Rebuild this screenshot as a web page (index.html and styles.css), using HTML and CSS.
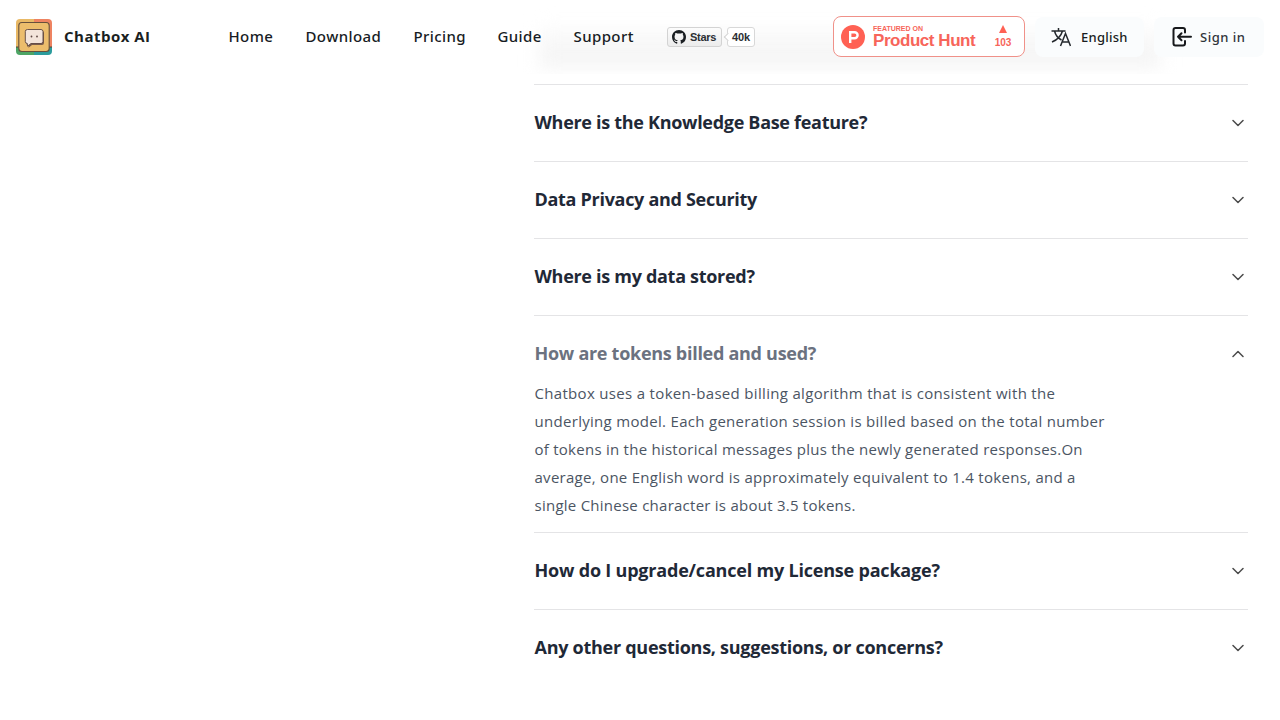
FILE: index.html
```html
<!DOCTYPE html>
<html lang="en">
<head>
<meta charset="utf-8">
<title>Chatbox AI</title>
<link rel="stylesheet" href="styles.css">
</head>
<body>
<header class="header">
  <a class="brand">
    <svg class="logo" viewBox="0 0 36 36">
      <defs><clipPath id="logo-clip"><rect width="36" height="36" rx="4"/></clipPath></defs>
      <g clip-path="url(#logo-clip)">
        <rect width="18" height="28" fill="#e9b966"/><rect x="18" width="18" height="28" fill="#ee8361"/>
        <rect y="28" width="18" height="8" fill="#4da565"/><rect x="18" y="28" width="18" height="8" fill="#2b9c9d"/>
        <path d="M0 28h3M33 28h3" stroke="#5a4638"/>
        <rect x="2.8" y="3.500" width="30.400" height="29" rx="3" fill="#ecbd6c" stroke="#66503c" stroke-width="1.1"/>
        <path d="M12.500 12h13.500q2 0 2 2v10q0 2-2 2H16l-3.500 2.700-.2-2.700q-2-.1-2-2V14q0-2 2.200-2z" fill="#7a5c4b"/>
        <path d="M11.500 10.500h13.500q2 0 2 2v10q0 2-2 2H15l-3.500 2.700-.2-2.700q-2-.1-2-2v-10q0-2 2.200-2z" fill="#f3e4da" stroke="#5c4540" stroke-width=".9"/>
        <circle cx="15.500" cy="17.500" r=".9" fill="#5c4540"/><circle cx="21" cy="17.500" r=".9" fill="#5c4540"/>
      </g>
    </svg>
    <span class="brand-name">Chatbox AI</span>
  </a>
  <nav class="nav">
    <a class="home">Home</a><a class="download">Download</a><a class="pricing">Pricing</a><a class="guide">Guide</a><a class="support">Support</a>
  </nav>
  <div class="github">
    <a class="gh-button">
      <svg class="gh-icon" viewBox="0 0 16 16"><path d="M8 0C3.580 0 0 3.580 0 8c0 3.540 2.290 6.530 5.470 7.590.4.070.550-.170.550-.380 0-.190-.010-.820-.010-1.490-2.010.370-2.530-.490-2.690-.940-.090-.230-.480-.940-.820-1.130-.280-.150-.680-.520-.010-.530.630-.010 1.080.580 1.230.820.720 1.210 1.870.870 2.330.660.070-.520.280-.870.510-1.070-1.780-.200-3.640-.890-3.640-3.950 0-.870.310-1.590.820-2.150-.080-.200-.360-1.020.080-2.120 0 0 .670-.210 2.200.820.640-.180 1.320-.270 2-.270s1.360.090 2 .270c1.530-1.040 2.200-.820 2.200-.820.440 1.100.160 1.920.080 2.120.510.560.820 1.270.820 2.150 0 3.070-1.870 3.750-3.650 3.950.290.250.540.730.540 1.480 0 1.070-.010 1.930-.010 2.200 0 .210.150.460.550.380A8.010 8.010 0 0 0 16 8c0-4.420-3.580-8-8-8z"/></svg>
      <span>Stars</span>
    </a>
    <a class="gh-count">40k</a>
  </div>
  <a class="product-hunt">
    <span class="ph-mark"><svg viewBox="0 0 24 24"><path fill-rule="evenodd" d="M8 6h5.600a4.200 4.200 0 0 1 0 8.400H10.400V18H8zM10.400 8.400v3.600h3.200a1.800 1.800 0 0 0 0-3.600z"/></svg></span>
    <span class="ph-text"><span class="ph-small">FEATURED ON</span><span class="ph-big">Product Hunt</span></span>
    <span class="ph-votes"><svg viewBox="0 0 10 10"><path d="M5 0l5 10H0z"/></svg><span>103</span></span>
  </a>
  <a class="action language">
    <svg class="language-icon" viewBox="0 0 20 20"><path d="M.5 4h14M7.500 1v3M3.500 4c1 4 4 7.500 7 9M11.500 4C10 9 6 13 1 15M9.500 19l5-12.500 5 12.500M11.200 15h6.600"/></svg>
    <span>English</span>
  </a>
  <a class="action signin">
    <svg class="signin-icon" viewBox="0 0 20 20"><path d="M13 5.500V3q0-2-2-2H3.500Q1.500 1 1.500 3v13.500q0 2 2 2H11q2 0 2-2V14M19 9.800H6M9.500 6.300L6 9.800l3.500 3.500"/></svg>
    <span>Sign in</span>
  </a>
</header>
<main class="faq">
  <section class="item"><h3 class="q1">Where is the Knowledge Base feature?</h3><svg class="chevron" viewBox="0 0 12 8"><path d="M1 1.500l5 5 5-5"/></svg></section>
  <section class="item"><h3 class="q2">Data Privacy and Security</h3><svg class="chevron" viewBox="0 0 12 8"><path d="M1 1.500l5 5 5-5"/></svg></section>
  <section class="item"><h3 class="q3">Where is my data stored?</h3><svg class="chevron" viewBox="0 0 12 8"><path d="M1 1.500l5 5 5-5"/></svg></section>
  <section class="item open">
    <div class="question"><h3 class="q4">How are tokens billed and used?</h3><svg class="chevron" viewBox="0 0 12 8"><path d="M1 6.500l5-5 5 5"/></svg></div>
    <p class="answer"><span class="a1">Chatbox uses a token-based billing algorithm that is consistent with the</span><br><span class="a2">underlying model. Each generation session is billed based on the total number</span><br><span class="a3">of tokens in the historical messages plus the newly generated responses.On</span><br><span class="a4">average, one English word is approximately equivalent to 1.4 tokens, and a</span><br><span class="a5">single Chinese character is about 3.5 tokens.</span></p>
  </section>
  <section class="item"><h3 class="q5">How do I upgrade/cancel my License package?</h3><svg class="chevron" viewBox="0 0 12 8"><path d="M1 1.500l5 5 5-5"/></svg></section>
  <section class="item"><h3 class="q6">Any other questions, suggestions, or concerns?</h3><svg class="chevron" viewBox="0 0 12 8"><path d="M1 1.500l5 5 5-5"/></svg></section>
</main>
</body>
</html>
```
FILE: styles.css
```css
* { box-sizing: border-box; }
body { margin: 0; height: 720px; overflow: hidden; background: #fff; color: #1f2937; font-family: "Segoe UI", "Open Sans", "Noto Sans", sans-serif; }
svg { display: block; flex: none; }
.header { position: relative; height: 74px; display: flex; align-items: center; padding: 0 16px; overflow: hidden; white-space: nowrap; }
.header::before { content: ""; position: absolute; left: 539px; top: 28px; width: 622px; height: 39px; background: linear-gradient(#fbfbfb, #f3f3f3); filter: blur(9px); z-index: -1; }
.brand { display: flex; align-items: center; width: 212.5px; gap: 12px; }
.logo { width: 36px; height: 36px; }
.brand-name { font-size: 15px; font-weight: 700; color: #1b1f22; letter-spacing: .48px; padding-bottom: 2px; }
.nav { display: flex; gap: 32px; font-family: "Segoe UI", "Noto Sans", sans-serif; font-size: 15px; font-weight: 500; color: #171c24; padding-bottom: 2px; }
.nav a { letter-spacing: .4px; }
.home { width: 45px; }
.download { width: 76px; }
.pricing { width: 52px; }
.guide { width: 44px; }
.support { width: 61.5px; }
.github { display: flex; gap: 5px; width: 166px; margin-left: 32px; font: bold 11px/18px "Liberation Sans", sans-serif; color: #2b2f34; }
.gh-button { width: 55px; height: 20px; display: flex; align-items: center; gap: 4px; padding-left: 4px; border: 1px solid #d3d3d3; border-radius: 3px; background: linear-gradient(#fcfcfc, #ececec); letter-spacing: -.3px; }
.gh-icon { width: 14px; height: 14px; fill: #1b1f23; }
.gh-count { position: relative; width: 28px; height: 20px; border: 1px solid #d8d8d8; border-radius: 3px; background: #fff; text-align: center; letter-spacing: -.1px; }
.gh-count::before { content: ""; position: absolute; left: -3px; top: 6px; width: 5px; height: 5px; border-left: 1px solid #d3d3d3; border-bottom: 1px solid #d3d3d3; background: #fff; transform: rotate(45deg); }
.product-hunt { display: flex; align-items: center; width: 192px; height: 41px; margin-top: -1px; padding-left: 7px; border: 1px solid #f09189; border-radius: 8px; background: #fff; color: #f7655a; font-family: "Liberation Sans", sans-serif; font-weight: 700; }
.ph-mark { width: 24px; height: 24px; border-radius: 50%; background: #ff6154; }
.ph-mark svg { fill: #fff; }
.ph-text { display: flex; flex-direction: column; width: 121px; margin-left: 8px; }
.ph-small { font-size: 7px; line-height: 8px; }
.ph-big { font-size: 17px; line-height: 15px; letter-spacing: -.45px; }
.ph-votes { display: flex; flex-direction: column; align-items: center; gap: 4px; width: 18px; font-size: 10px; line-height: 12px; }
.ph-votes svg { width: 8px; height: 8px; fill: #ff6154; }
.action { display: flex; align-items: center; height: 40px; border-radius: 8px; background: #fafcfd; font-family: "Segoe UI", "Noto Sans", sans-serif; font-size: 13px; font-weight: 500; letter-spacing: .25px; }
.language { width: 109px; margin-left: 10px; padding-left: 16px; gap: 10px; color: #191d22; }
.signin { width: 110px; margin-left: 10px; padding-left: 18px; gap: 8px; color: #30343a; letter-spacing: .5px; }
.language-icon { width: 20px; height: 20px; fill: none; stroke: #24282d; stroke-width: 1.5; }
.signin-icon { width: 20px; height: 20px; fill: none; stroke: #17191c; stroke-width: 2; stroke-linecap: round; stroke-linejoin: round; }
.faq { width: 714px; margin: 10px 0 0 534px; }
.item { height: 77px; border-top: 1px solid #e4e4e6; display: flex; align-items: center; justify-content: space-between; padding-right: 4px; }
.item h3 { margin: 0; padding: 0 0 2px .5px; font-size: 18px; line-height: 28px; font-weight: 700; color: #1f2937; white-space: nowrap; letter-spacing: -.3px; }
.item .q4 { letter-spacing: -.28px; }
.item .q5 { letter-spacing: -.2px; }
.item .q6 { letter-spacing: -.27px; }
.chevron { width: 12px; height: 8px; fill: none; stroke: #4b4b4b; stroke-width: 1.5; stroke-linecap: round; stroke-linejoin: round; }
.open { display: block; height: 217px; }
.open .question { display: flex; align-items: center; justify-content: space-between; height: 76px; }
.item.open h3 { color: #6b7280; }
.answer { margin: -13px 0 0; padding-left: .5px; font-size: 15px; line-height: 28px; color: #4b5563; white-space: nowrap; letter-spacing: .3px; }
.a1 { letter-spacing: .32px; }
.a3 { letter-spacing: .255px; }
.a4 { letter-spacing: .28px; }
.a5 { letter-spacing: .25px; }
```
